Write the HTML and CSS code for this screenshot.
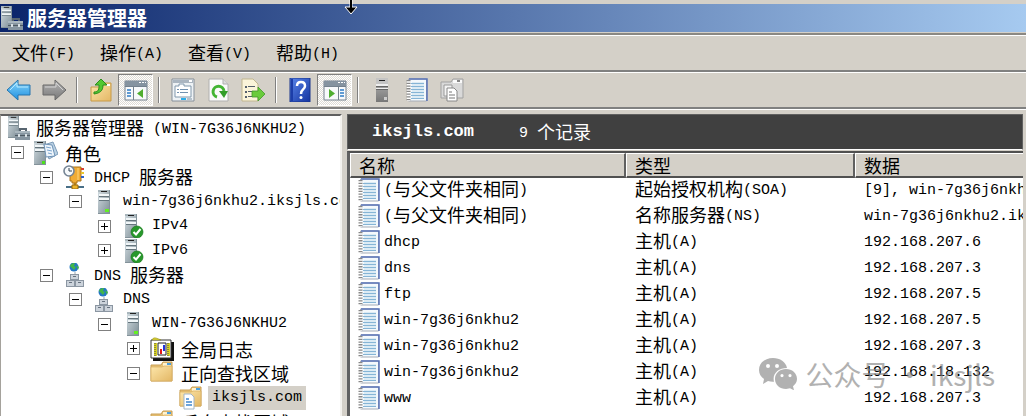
FILE: index.html
```html
<!DOCTYPE html>
<html lang="zh-CN">
<head>
  <meta charset="utf-8">
  <title>服务器管理器</title>
  <link rel="stylesheet" href="styles.css">
</head>
<body>

<!-- icon set -->
<svg class="defs" aria-hidden="true">
  <defs>
    <linearGradient id="gMetal" x1="0" x2="1" y1="0" y2="1">
      <stop offset="0" stop-color="#d3dde2"/><stop offset="1" stop-color="#7c8c94"/>
    </linearGradient>
    <linearGradient id="gFolder" x1="0" x2="1" y1="0" y2="1">
      <stop offset="0" stop-color="#fde7ab"/><stop offset="1" stop-color="#e3b765"/>
    </linearGradient>
    <linearGradient id="gBlue" x1="0" x2="0" y1="0" y2="1">
      <stop offset="0" stop-color="#8ad7fb"/><stop offset="1" stop-color="#1e8fe0"/>
    </linearGradient>
    <linearGradient id="gGray" x1="0" x2="0" y1="0" y2="1">
      <stop offset="0" stop-color="#b5b5b5"/><stop offset="1" stop-color="#777"/>
    </linearGradient>
    <linearGradient id="gHelp" x1="0" x2="1" y1="0" y2="1">
      <stop offset="0" stop-color="#5a86ea"/><stop offset="1" stop-color="#1534a0"/>
    </linearGradient>
  </defs>
  <symbol id="tower" viewBox="0 0 12 24">
    <rect width="12" height="24" fill="url(#gMetal)"/>
    <path d="M0 0h12v2H0z" fill="#a9b6bc"/>
    <path d="M3 1h6v1H3z" fill="#222"/>
    <path d="M1 4h10v2H1zM1 8h10v2H1z" fill="#f1f6f8"/>
    <path d="M1 6h10v1H1zM1 10h10v1H1z" fill="#65757d"/>
    <path d="M11 0h1v24H0v-1h11z" fill="#83929a"/>
  </symbol>
  <symbol id="server" viewBox="0 0 24 24">
    <use href="#tower" x="6" y="0" width="12" height="24"/>
    <rect x="13" y="19" width="4" height="3" fill="#63ef22"/>
  </symbol>
  <symbol id="server-gray" viewBox="0 0 24 24">
    <rect x="6" width="12" height="24" fill="url(#gGray)"/>
    <path d="M6 0h12v6H6z" fill="#c4c4c4"/>
    <path d="M9 2h6v1H9z" fill="#222"/>
    <path d="M6 6h12v2H6zM6 10h12v1H6z" fill="#eee"/>
    <path d="M6 8h12v1H6zM6 11h12v1H6z" fill="#666"/>
    <rect x="14" y="19" width="3" height="3" fill="#ccc"/>
  </symbol>
  <symbol id="manager" viewBox="0 0 24 24">
    <use href="#tower" x="1" y="0" width="11" height="22"/>
    <path d="M13 16v-3h6v3" fill="none" stroke="#586570" stroke-width="2"/>
    <rect x="8" y="15" width="15" height="9" fill="#8695a0"/>
    <path d="M8 15h15v2H8z" fill="#a9b6be"/>
    <path d="M8 19h15v1H8z" fill="#4e5a63"/>
    <path d="M11 18h2v3h-2zM18 18h2v3h-2z" fill="#d8e0e4"/>
  </symbol>
  <symbol id="roles" viewBox="0 0 24 24">
    <use href="#tower" x="0" y="0" width="12" height="24"/>
    <rect x="8" y="20" width="3" height="3" fill="#4be01c"/>
    <path d="M10 4l9-3 5 12-9 5z" fill="#b9d0e3" stroke="#7d9cb8"/>
    <path d="M10 3l8 1 3 11-9 1z" fill="#eef5fb" stroke="#6f93b6"/>
    <path d="M12 6l5 1M13 9l5 1M14 12l4 1" stroke="#79a4ce"/>
  </symbol>
  <symbol id="dhcp" viewBox="0 0 24 24">
    <path d="M12 17v5" stroke="#c28a18" stroke-width="3"/>
    <path d="M3 22h18" stroke="#496f87" stroke-width="2"/>
    <path d="M9 20h6v4H9z" fill="#edb52d" stroke="#956712"/>
    <path d="M7 2h11v14h-4v2h-5v-2H7z" fill="#f0ab35" stroke="#aa721a"/>
    <path d="M15 3v12" stroke="#ffd67a"/>
    <path d="M18 3h3v2h-3z" fill="#d63e30"/><path d="M18 7h3v2h-3z" fill="#e9c52d"/>
    <path d="M18 11h3v2h-3z" fill="#2e61c8"/>
    <circle cx="6" cy="6" r="5" fill="#f7fafc" stroke="#758494" stroke-width="1.6"/>
    <path d="M6 3v3h3" fill="none" stroke="#345"/>
  </symbol>
  <symbol id="server-ok" viewBox="0 0 24 24">
    <use href="#tower" x="4" y="0" width="12" height="24"/>
    <circle cx="16" cy="18" r="6" fill="#28982c" stroke="#187a1b" stroke-width=".7"/>
    <path d="M12.5 18l2.5 2.500 4.500-5.500" fill="none" stroke="#fff" stroke-width="2"/>
  </symbol>
  <symbol id="dns" viewBox="0 0 24 24">
    <path d="M12 9v12" stroke="#9aa6b0"/>
    <circle cx="11" cy="4" r="4.500" fill="#2477c5"/>
    <path d="M7 3c1-3 4-3 5-3l-1 3 2 1-2 3-2-2zM13 2l3 2-1 3z" fill="#42b649"/>
    <g fill="#ccd3db" stroke="#8b96a2">
      <rect x="7.500" y="11.500" width="8" height="5"/>
      <rect x="3.500" y="17.500" width="8" height="6"/>
      <rect x="12.500" y="17.500" width="8" height="6"/>
    </g>
    <path d="M10 13h3v1h-3zM6 19h3v1H6zM15 19h3v1h-3z" fill="#66717e"/>
  </symbol>
  <symbol id="log" viewBox="0 0 24 24">
    <path d="M3 5h21v19H3z" fill="#111"/>
    <path d="M1 3h20v18H1z" fill="#fff" stroke="#333"/>
    <path d="M2 3q1-3 4-2t5 2z" fill="#e5db35" stroke="#8e8924" stroke-width=".6"/>
    <path d="M4 6h3v13H4zM17 6h3v13h-3z" fill="#d8d426"/>
    <path d="M5 6v14M18 6v14" stroke="#444" stroke-dasharray="1 1"/>
    <path d="M8 6h8v12H8z" fill="#fff" stroke="#222"/>
    <path d="M10 12h2v5h-2z" fill="#e31818"/><path d="M13 8h2v6h-2z" fill="#2433dc"/>
  </symbol>
  <symbol id="folder" viewBox="0 0 24 24">
    <path d="M1 4h10l2-3h9v19H1z" fill="#e9c377" stroke="#c79e54"/>
    <path d="M13 2h8v3h-8z" fill="#fff3cf"/><path d="M17 2h4v2h-4z" fill="#4a9fe0"/>
    <path d="M1 6h11l2-1h8v15H1z" fill="url(#gFolder)" stroke="#d6ad60" stroke-width=".7"/>
  </symbol>
  <symbol id="zone" viewBox="0 0 24 24">
    <use href="#folder" width="24" height="24"/>
    <path d="M5 8h7l3 3v12H5z" fill="#fff" stroke="#a2b5c8"/>
    <path d="M7 13h3M7 16h6M7 19h6" stroke="#3f86cf" stroke-width="1.500"/>
  </symbol>
  <symbol id="record" viewBox="0 0 24 24">
    <path d="M3.500 1h18v22h-18z" fill="#f4f9fc" stroke="#a5abb6"/>
    <path d="M4 1h18v22" fill="none" stroke="#5873b8" stroke-width="1.500"/>
    <path d="M7 4h12v16H7z" fill="#dcebf4"/>
    <path d="M6 5.500h13M6 8.500h13M6 11.500h13M6 14.500h13M6 17.500h13M6 20.500h13" stroke="#86b5d6"/>
    <path d="M3.500 2v21" stroke="#fff" stroke-width="3"/>
    <path d="M3.500 2v21" stroke="#888" stroke-width="4" stroke-dasharray="1.300 1.400"/>
  </symbol>
  <symbol id="back" viewBox="0 0 24 24">
    <path d="M0 12L11 2v5h12v10H11v5z" fill="url(#gBlue)" stroke="#2675ad"/>
    <path d="M3 12l7-7v4h11" fill="none" stroke="#b5e8ff"/>
  </symbol>
  <symbol id="forward" viewBox="0 0 24 24">
    <path d="M24 12L13 2v5H1v10h12v5z" fill="url(#gGray)" stroke="#686868"/>
    <path d="M3 9h11V5l7 7" fill="none" stroke="#d2d2d2"/>
  </symbol>
  <symbol id="up" viewBox="0 0 24 24">
    <path d="M2 9h11l2-4h7v18H2z" fill="url(#gFolder)" stroke="#c89a47"/>
    <path d="M17 6h4v2h-4z" fill="#fff"/>
    <path d="M5 14c5 0 5-3 5-7H6l6-6 6 6h-4c0 6-3 8-9 9z" fill="#52c832" stroke="#2c8d1d"/>
  </symbol>
  <symbol id="pane-left" viewBox="0 0 24 24">
    <path d="M1 3h22v19H1z" fill="#f7f9fb" stroke="#74818e"/>
    <path d="M1 3h22v5H1z" fill="#8593a0"/><path d="M15 4h2v1h-2zM18 4h2v1h-2zM21 4h1v1h-1z" fill="#fff"/>
    <path d="M1 8h22v1H1zM9 9h1v13H9z" fill="#74818e"/>
    <path d="M3 11h4v2H3zM3 14h4v2H3zM3 17h4v2H3z" fill="#609bd3"/>
    <path d="M19 11v9l-6-4.500z" fill="#4fae31"/>
  </symbol>
  <symbol id="pane-right" viewBox="0 0 24 24">
    <path d="M1 3h22v19H1z" fill="#f7f9fb" stroke="#74818e"/>
    <path d="M1 3h22v5H1z" fill="#8593a0"/><path d="M15 4h2v1h-2zM18 4h2v1h-2zM21 4h1v1h-1z" fill="#fff"/>
    <path d="M1 8h22v1H1zM15 9h1v13h-1z" fill="#74818e"/>
    <path d="M17 11h4v2h-4zM17 14h4v2h-4zM17 17h4v2h-4z" fill="#609bd3"/>
    <path d="M6 11v9l6-4.500z" fill="#4fae31"/>
  </symbol>
  <symbol id="props" viewBox="0 0 24 24">
    <path d="M1 1h22v22H1z" fill="#eef2f5" stroke="#858f99"/>
    <path d="M2 2h20v3H2z" fill="#aab5c0"/><path d="M18 2h3v2h-3z" fill="#fff"/>
    <path d="M4 8h4V6h5v2h7v11H4z" fill="#fff" stroke="#8198ac"/>
    <path d="M6 11h2v1H6zM6 14h2v1H6zM9 11h8v1H9zM9 14h8v1H9z" fill="#7191b0"/>
    <path d="M10 20h5v2h-5z" fill="#2caeea"/><path d="M16 20h5v2h-5z" fill="#b6c2cc"/>
  </symbol>
  <symbol id="refresh" viewBox="0 0 24 24">
    <path d="M3 1h14l5 5v17H3z" fill="#fafafa" stroke="#b0b0b0"/>
    <path d="M17 1v5h5" fill="#ddd" stroke="#b0b0b0"/>
    <path d="M11 19a5.500 5.500 0 1 1 7-6" fill="none" stroke="#43b433" stroke-width="3"/>
    <path d="M13 13h9l-4 7z" fill="#329d28"/>
  </symbol>
  <symbol id="export" viewBox="0 0 24 24">
    <path d="M1 1h11l5 5v17H1z" fill="#fbf4d9" stroke="#c1b68f"/>
    <path d="M4 8h2v2H4zM4 13h2v2H4zM4 18h2v2H4zM7 8h7v1H7zM7 13h7v1H7zM7 18h7v1H7z" fill="#555f6c"/>
    <path d="M11 13h6V9l7 7-7 7v-4h-6z" fill="#6acb3b" stroke="#41972a" stroke-width=".8"/>
  </symbol>
  <symbol id="help" viewBox="0 0 24 24">
    <path d="M2 0h20v24H2z" fill="url(#gHelp)" stroke="#18358c"/>
    <path d="M4 1v22" stroke="#1c3da8" stroke-width="2"/>
    <path d="M9 8q0-4 4-4t4 4q0 2-2 3.500T13 16" fill="none" stroke="#fff" stroke-width="2.500"/>
    <circle cx="13" cy="19.500" r="1.500" fill="#fff"/>
  </symbol>
  <symbol id="copy-gray" viewBox="0 0 24 24">
    <path d="M1 4h10l2-3h10v19H1z" fill="#d9d9d9" stroke="#a1a1a1"/>
    <path d="M13 2h9v3h-9z" fill="#fafafa"/><path d="M17 2h3v2h-3z" fill="#888"/>
    <path d="M4 7h8v11H4z" fill="#f3f3f3" stroke="#999"/>
    <path d="M7 10h7l3 3v10H7z" fill="#fff" stroke="#888"/>
    <path d="M9 14h3M9 17h6M9 20h6" stroke="#777"/>
  </symbol>
</svg>

<div class="window">
  <header class="titlebar">
    <svg class="icon"><use href="#manager"/></svg>
    <h1>服务器管理器</h1>
  </header>

  <nav class="menubar">
    <button>文件<span class="en">(F)</span></button>
    <button>操作<span class="en">(A)</span></button>
    <button>查看<span class="en">(V)</span></button>
    <button>帮助<span class="en">(H)</span></button>
  </nav>

  <div class="toolbar">
    <button aria-label="后退"><svg class="icon"><use href="#back"/></svg></button>
    <button aria-label="前进"><svg class="icon"><use href="#forward"/></svg></button>
    <span class="sep"></span>
    <button aria-label="向上"><svg class="icon"><use href="#up"/></svg></button>
    <button class="on" aria-label="控制台树"><svg class="icon"><use href="#pane-left"/></svg></button>
    <span class="sep"></span>
    <button aria-label="属性"><svg class="icon"><use href="#props"/></svg></button>
    <button aria-label="刷新"><svg class="icon"><use href="#refresh"/></svg></button>
    <button aria-label="导出列表"><svg class="icon"><use href="#export"/></svg></button>
    <span class="sep"></span>
    <button aria-label="帮助"><svg class="icon"><use href="#help"/></svg></button>
    <button class="on" aria-label="操作窗格"><svg class="icon"><use href="#pane-right"/></svg></button>
    <span class="sep"></span>
    <button aria-label="服务器"><svg class="icon"><use href="#server-gray"/></svg></button>
    <button aria-label="记录"><svg class="icon"><use href="#record"/></svg></button>
    <button aria-label="区域"><svg class="icon"><use href="#copy-gray"/></svg></button>
  </div>

  <div class="panes">
    <ul class="tree">
      <li class="root"><svg class="icon"><use href="#manager"/></svg><span class="label">服务器管理器<span class="en"> (WIN-7G36J6NKHU2)</span></span></li>
      <li class="l1"><button class="box" aria-label="折叠"></button><svg class="icon"><use href="#roles"/></svg><span class="label">角色</span></li>
      <li class="l2"><button class="box" aria-label="折叠"></button><svg class="icon"><use href="#dhcp"/></svg><span class="label"><span class="en">DHCP </span>服务器</span></li>
      <li class="l3"><button class="box" aria-label="折叠"></button><svg class="icon"><use href="#server"/></svg><span class="label en">win-7g36j6nkhu2.iksjls.com</span></li>
      <li class="l4"><button class="box plus" aria-label="展开"></button><svg class="icon"><use href="#server-ok"/></svg><span class="label en">IPv4</span></li>
      <li class="l4"><button class="box plus" aria-label="展开"></button><svg class="icon"><use href="#server-ok"/></svg><span class="label en">IPv6</span></li>
      <li class="l2"><button class="box" aria-label="折叠"></button><svg class="icon"><use href="#dns"/></svg><span class="label"><span class="en">DNS </span>服务器</span></li>
      <li class="l3"><button class="box" aria-label="折叠"></button><svg class="icon"><use href="#dns"/></svg><span class="label en">DNS</span></li>
      <li class="l4"><button class="box" aria-label="折叠"></button><svg class="icon"><use href="#server"/></svg><span class="label en">WIN-7G36J6NKHU2</span></li>
      <li class="l5"><button class="box plus" aria-label="展开"></button><svg class="icon"><use href="#log"/></svg><span class="label">全局日志</span></li>
      <li class="l5"><button class="box" aria-label="折叠"></button><svg class="icon"><use href="#folder"/></svg><span class="label">正向查找区域</span></li>
      <li class="l6"><svg class="icon"><use href="#zone"/></svg><span class="label en selected">iksjls.com</span></li>
      <li class="l5"><button class="box" aria-label="折叠"></button><svg class="icon"><use href="#folder"/></svg><span class="label">反向查找区域</span></li>
    </ul>

    <main class="detail">
      <div class="banner"><strong>iksjls.com</strong><span><span class="en">9 </span>个记录</span></div>
      <div class="list">
        <table>
          <thead>
            <tr><th class="name">名称</th><th class="type">类型</th><th>数据</th></tr>
          </thead>
          <tbody>
            <tr><td><svg class="icon"><use href="#record"/></svg><span class="en">(</span>与父文件夹相同<span class="en">)</span></td><td>起始授权机构<span class="en">(SOA)</span></td><td class="en">[9], win-7g36j6nkhu2.iksjls.com</td></tr>
            <tr><td><svg class="icon"><use href="#record"/></svg><span class="en">(</span>与父文件夹相同<span class="en">)</span></td><td>名称服务器<span class="en">(NS)</span></td><td class="en">win-7g36j6nkhu2.iksjls.com</td></tr>
            <tr><td><svg class="icon"><use href="#record"/></svg><span class="en">dhcp</span></td><td>主机<span class="en">(A)</span></td><td class="en">192.168.207.6</td></tr>
            <tr><td><svg class="icon"><use href="#record"/></svg><span class="en">dns</span></td><td>主机<span class="en">(A)</span></td><td class="en">192.168.207.3</td></tr>
            <tr><td><svg class="icon"><use href="#record"/></svg><span class="en">ftp</span></td><td>主机<span class="en">(A)</span></td><td class="en">192.168.207.5</td></tr>
            <tr><td><svg class="icon"><use href="#record"/></svg><span class="en">win-7g36j6nkhu2</span></td><td>主机<span class="en">(A)</span></td><td class="en">192.168.207.5</td></tr>
            <tr><td><svg class="icon"><use href="#record"/></svg><span class="en">win-7g36j6nkhu2</span></td><td>主机<span class="en">(A)</span></td><td class="en">192.168.207.3</td></tr>
            <tr><td><svg class="icon"><use href="#record"/></svg><span class="en">win-7g36j6nkhu2</span></td><td>主机<span class="en">(A)</span></td><td class="en">192.168.18.132</td></tr>
            <tr><td><svg class="icon"><use href="#record"/></svg><span class="en">www</span></td><td>主机<span class="en">(A)</span></td><td class="en">192.168.207.3</td></tr>
          </tbody>
        </table>
      </div>
    </main>
  </div>

  <svg class="cursor" viewBox="0 0 14 15"><path d="M6 -1h2v8h5l-6 7-6-7h5z" fill="#000" stroke="#fff"/><path d="M7 0v10" stroke="#000" stroke-width="2"/></svg>

  <div class="watermark">
    <svg viewBox="0 0 38 32">
      <path fill-rule="evenodd" d="M14 0C6 0 0 5 0 12c0 4 2 7 5 9l-1 5 5-3c2 .5 4 1 6 .7C13 16 19 10 28 10 27 4 21 0 14 0zM9 6a2 2 0 1 1 0 4 2 2 0 0 1 0-4zm9 0a2 2 0 1 1 0 4 2 2 0 0 1 0-4z"/>
      <path fill-rule="evenodd" d="M27 11c-6 0-11 4-11 10s5 10 11 10l4-.7 4 2-1-4c2-2 4-4 4-7.300 0-6-5-10-11-10zm-4 5a1.600 1.600 0 1 1 0 3.200 1.600 1.600 0 0 1 0-3.200zm8 0a1.600 1.600 0 1 1 0 3.200 1.600 1.600 0 0 1 0-3.200z"/>
    </svg>
    <span>公众号 · iksjls</span>
  </div>
</div>

</body>
</html>
```
FILE: styles.css
```css
* {
  box-sizing: border-box;
}

body {
  margin: 0;
  background: #d4d0c8;
  color: #000;
  font: 18px/24px "Noto Sans CJK SC", sans-serif;
}

button {
  padding: 0;
  border: 0;
  background: none;
  color: inherit;
  font: inherit;
}

.defs {
  position: absolute;
  width: 0;
  height: 0;
}

/* latin text is half the width of the chinese text */
.en {
  font-family: "Liberation Mono", "Noto Sans CJK SC", monospace;
  font-size: 15px;
  vertical-align: 2px;
  white-space: pre;
}

.icon {
  width: 24px;
  height: 24px;
  flex: none;
}

.window {
  position: relative;
  display: flex;
  flex-direction: column;
  height: 100vh;
  overflow: hidden;
  padding-top: 4px;
}

.titlebar {
  display: flex;
  align-items: center;
  gap: 3px;
  height: 28px;
  flex: none;
  background: linear-gradient(to right, #0a246a, #a6caf0);
}

.titlebar h1 {
  margin: 0;
  color: #fff;
  font-size: 20px;
  line-height: 28px;
}

.menubar {
  display: flex;
  gap: 25px;
  height: 39px;
  flex: none;
  margin-top: 1px;
  padding: 2px 12px 0;
  border-top: 2px solid #8a8883;
  border-bottom: 2px solid #808080;
  box-shadow: inset 0 1px #fff;
}

.toolbar {
  display: flex;
  height: 37px;
  flex: none;
  padding: 1px;
  border-top: 1px solid #fff;
  border-bottom: 2px solid #808080;
}

.toolbar button {
  display: flex;
  align-items: center;
  justify-content: center;
  width: 35px;
}

.toolbar .on {
  border: 1px solid;
  border-color: #808080 #fff #fff #808080;
  background: repeating-conic-gradient(#fff 0 25%, #dedbd5 0 50%) 0 0 / 2px 2px;
}

.sep {
  width: 2px;
  margin: 3px 5px;
  border-left: 1px solid #808080;
  border-right: 1px solid #fff;
}

.panes {
  display: flex;
  flex: 1;
  min-height: 0;
  padding-top: 4px;
  border-top: 1px solid #fff;
}

.tree {
  width: 342px;
  flex: none;
  margin: 0;
  padding: 0 0 0 6px;
  overflow: hidden;
  border: 1px solid #a5a29c;
  border-top: 2px solid #606060;
  border-right: 2px solid #f4f2ee;
  border-bottom: 0;
  background: #fff;
  list-style: none;
}

.tree li {
  display: flex;
  align-items: center;
  height: 24px;
  white-space: nowrap;
}

.tree li:nth-child(even) {
  height: 25px;
}

.label {
  margin-left: 7px;
}

.root .label,
.selected {
  margin-left: 5px;
}

.l1 { padding-left: 4px; }
.l2 { padding-left: 33px; }
.l3 { padding-left: 62px; }
.l4 { padding-left: 91px; }
.l5 { padding-left: 120px; }
.l6 { padding-left: 172px; }

.box {
  width: 13px;
  height: 13px;
  margin-right: 10px;
  flex: none;
  border: 1px solid #808080;
  background: linear-gradient(#000, #000) center / 7px 1px no-repeat;
}

.plus {
  background:
    linear-gradient(#000, #000) center / 7px 1px no-repeat,
    linear-gradient(#000, #000) center / 1px 7px no-repeat;
}

.selected {
  padding: 0 4px;
  background: #d4d0c8;
}

.detail {
  display: flex;
  flex-direction: column;
  flex: 1;
  min-width: 0;
  margin: 0 3px 0 5px;
}

.banner {
  display: flex;
  align-items: center;
  gap: 45px;
  height: 36px;
  flex: none;
  padding-left: 24px;
  border: 1px solid #606060;
  border-bottom: 1px solid #fff;
  background: #404040;
  color: #fff;
}

.banner strong {
  font: bold 17px/24px "Liberation Mono", monospace;
}

.list {
  flex: 1;
  min-height: 0;
  overflow: hidden;
  margin-top: 1px;
  border-top: 2px solid #505050;
  border-left: 3px solid #606060;
  background: #fff;
}

table {
  width: 100%;
  table-layout: fixed;
  border-collapse: separate;
  border-spacing: 0;
}

th {
  height: 25px;
  padding: 0 8px;
  border: 1px solid #fff;
  border-right: 2px solid #606060;
  border-bottom: 2px solid #505050;
  background: #d4d0c8;
  font-weight: normal;
  line-height: 22px;
  text-align: left;
}

th:last-child {
  border-right: 0;
}

.name { width: 276px; }
.type { width: 229px; }

td {
  height: 26px;
  padding: 0 9px;
  overflow: hidden;
  line-height: 20px;
  vertical-align: top;
  white-space: nowrap;
}

td .en {
  line-height: 1;
}

td.en {
  line-height: 26px;
  vertical-align: top;
}

td:last-child {
  padding-right: 0;
}

td .icon {
  margin-right: 3px;
  margin-left: -2px;
  vertical-align: top;
}

.cursor {
  position: absolute;
  top: 0;
  left: 344px;
  width: 14px;
  height: 15px;
}

.watermark {
  position: absolute;
  right: 31px;
  bottom: 24px;
  display: flex;
  align-items: center;
  gap: 8px;
  color: #888;
  font-size: 28px;
  line-height: 36px;
  opacity: .65;
}

.watermark svg {
  width: 38px;
  height: 32px;
  fill: currentColor;
}
```
